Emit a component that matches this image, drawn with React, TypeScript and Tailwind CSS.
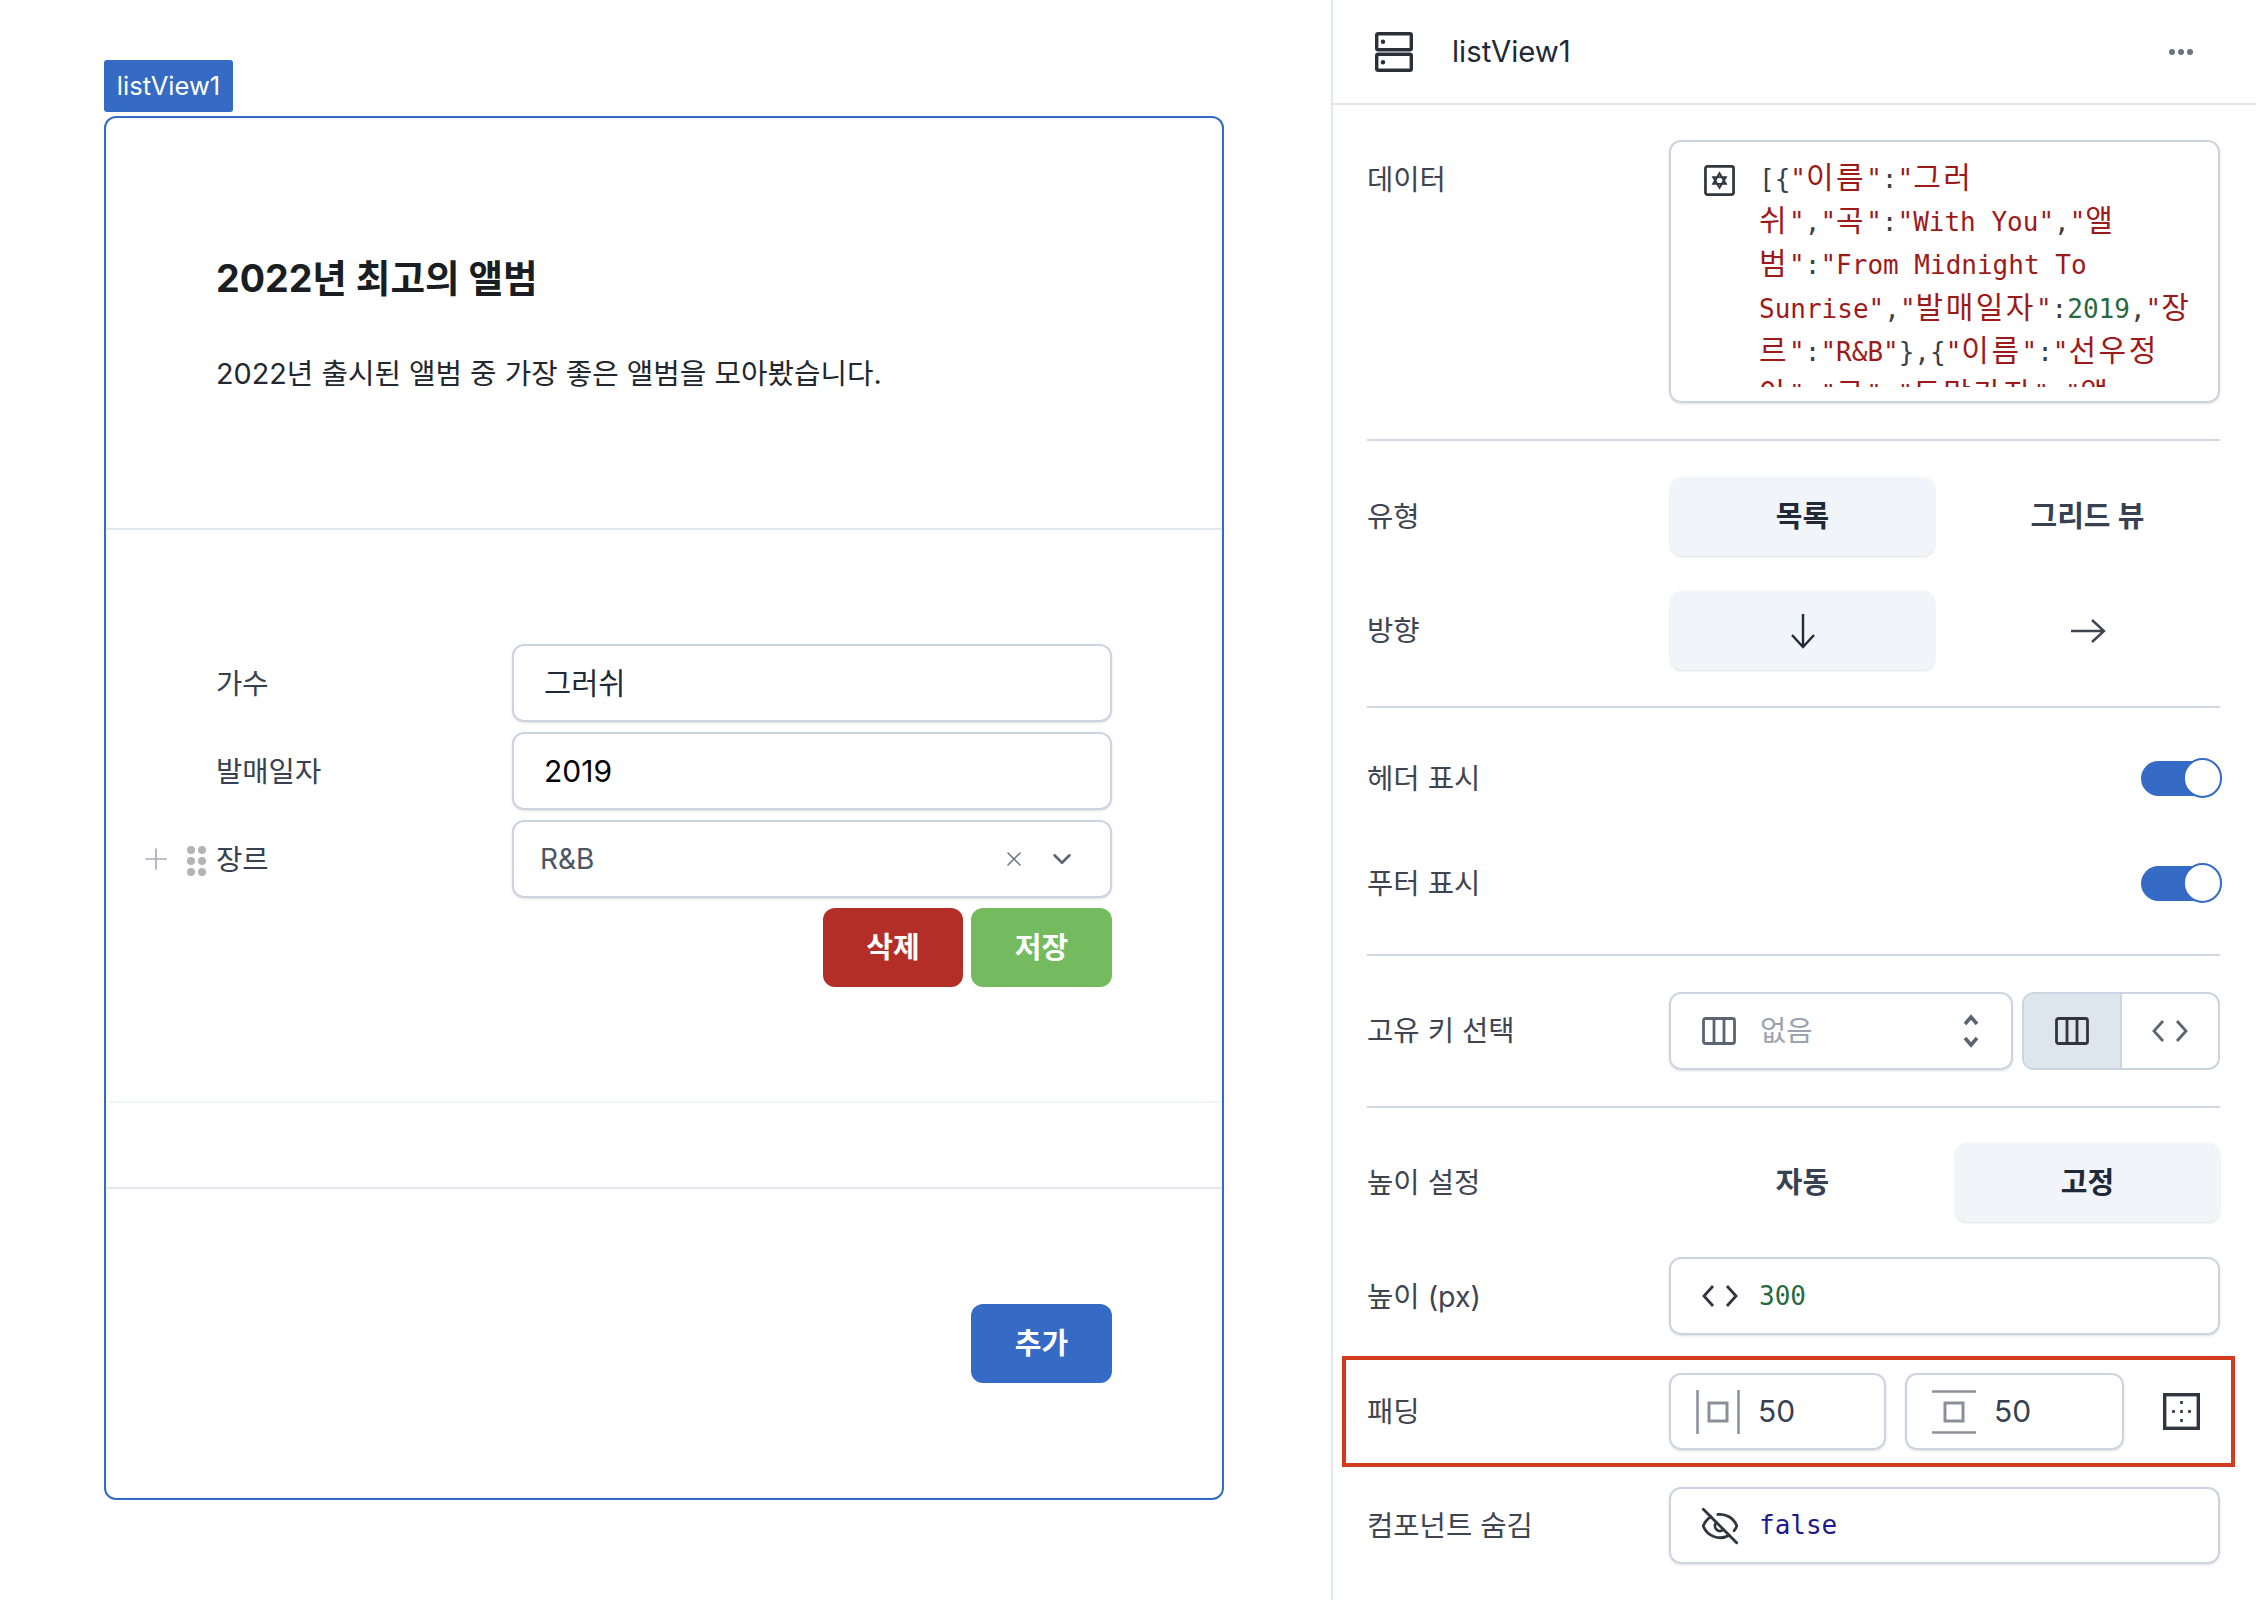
import { EyeOff, X, ChevronDown, Plus } from 'lucide-react';

const mono = "font-['DejaVu_Sans_Mono','Noto_Sans_CJK_KR',monospace]";

function Code({ text, color }: { text: string; color: string }) {
  const parts = text.split(/([가-힣]+)/);
  return (
    <span className={color}>
      {parts.map((p, i) =>
        /[가-힣]/.test(p) ? (
          <span key={i} className="text-[30px] leading-none tracking-[2.5px]">{p}</span>
        ) : (
          <span key={i}>{p}</span>
        )
      )}
    </span>
  );
}

const red = 'text-[#9e1a1a]';
const dark = 'text-[#3b4048]';
const green = 'text-[#27693f]';

const lines: [string, string][][] = [
  [['[{', dark], ['"이름"', red], [':', dark], ['"그러', red]],
  [['쉬"', red], [',', dark], ['"곡"', red], [':', dark], ['"With You"', red], [',', dark], ['"앨', red]],
  [['범"', red], [':', dark], ['"From Midnight To', red]],
  [['Sunrise"', red], [',', dark], ['"발매일자"', red], [':', dark], ['2019', green], [',', dark], ['"장', red]],
  [['르"', red], [':', dark], ['"R&B"', red], ['},{', dark], ['"이름"', red], [':', dark], ['"선우정', red]],
  [['아"', red], [',', dark], ['"곡"', red], [':', dark], ['"도망가자"', red], [',', dark], ['"앨', red]],
];

function TableIcon({ className }: { className: string }) {
  return (
    <svg viewBox="0 0 34 28" fill="none" stroke="currentColor" strokeWidth="2.8" className={className}>
      <rect x="1.5" y="1.5" width="31" height="25" rx="2" />
      <path d="M12 1.5v25M22 1.5v25" />
    </svg>
  );
}

function CodeIcon({ className }: { className: string }) {
  return (
    <svg viewBox="0 0 36 24" fill="none" stroke="currentColor" strokeWidth="2.8" className={className}>
      <path d="M11 2 2 12l9 10M25 2l9 10-9 10" />
    </svg>
  );
}

function Toggle() {
  return (
    <div className="relative w-[81px] h-[40px] flex items-center">
      <div className="w-[62px] h-[35px] rounded-l-full bg-[#356ac5]" />
      <div className="absolute right-0 top-0 w-[39px] h-[40px] rounded-full bg-white border-2 border-[#356ac5]" />
    </div>
  );
}

function Field({ children }: { children: React.ReactNode }) {
  return (
    <div className="h-[78px] border-2 border-[#cbd5e1] rounded-[12px] bg-white shadow-sm flex items-center">
      {children}
    </div>
  );
}

function FormRow({ label, children }: { label: string; children: React.ReactNode }) {
  return (
    <div className="flex items-center relative">
      <div className="w-[296px] pt-[3px] text-[28.6px] text-[#374151]">{label}</div>
      <div className="flex-1">{children}</div>
    </div>
  );
}

function Label({ children }: { children: React.ReactNode }) {
  return <div className="w-[302px] shrink-0 text-[28.6px] leading-[40px] text-[#3f4550]">{children}</div>;
}

function Seg({ active, children }: { active?: boolean; children: React.ReactNode }) {
  return (
    <div
      className={
        active
          ? 'w-[265px] h-[79px] rounded-[12px] bg-[#f1f4f8] shadow-sm flex items-center justify-center text-[29px] font-semibold text-[#1f2937]'
          : 'w-[265px] h-[79px] rounded-[12px] flex items-center justify-center text-[29px] font-semibold text-[#374151]'
      }
    >
      {children}
    </div>
  );
}

function Line({ mt }: { mt: string }) {
  return <div className={`${mt} h-[2px] bg-[#cfd8e3]`} />;
}

export default function App() {
  return (
    <div className="w-[2256px] h-[1600px] overflow-hidden bg-white flex font-['Inter','Noto_Sans_CJK_KR',sans-serif]">
      {/* Canvas */}
      <div className="w-[1331px] shrink-0 pl-[104px] pt-[60px]">
        <div className="w-[129px] h-[52px] mb-[4px] rounded-[3px] bg-[#356ac5] text-white text-[25.5px] flex items-center justify-center">
          listView1
        </div>
        <div className="w-[1120px] h-[1384px] border-2 border-[#356ac5] rounded-[12px] flex flex-col">
          <div className="h-[412px] shrink-0 border-b-2 border-[#e2e8f0] pl-[110px] pt-[133px]">
            <h1 className="text-[37.6px] leading-[56px] font-bold text-[#1a1d21]">2022년 최고의 앨범</h1>
            <p className="mt-[45px] text-[28.8px] leading-[44px] text-[#23272e]">2022년 출시된 앨범 중 가장 좋은 앨범을 모아봤습니다.</p>
          </div>
          <div className="h-[573px] shrink-0 border-b-2 border-[#f1f5f9] px-[110px] pt-[114px] flex flex-col gap-[10px]">
            <FormRow label="가수">
              <Field><span className="pl-[30px] text-[29.5px] text-[#1f2937]">그러쉬</span></Field>
            </FormRow>
            <FormRow label="발매일자">
              <Field><span className="pl-[30px] text-[30px] text-black">2019</span></Field>
            </FormRow>
            <FormRow label="장르">
              <Plus className="absolute -left-[77px] top-[22px] w-[34px] h-[34px] text-[#a8adb5]" strokeWidth={1.2} />
              <div className="absolute -left-[29px] top-[26px] grid grid-cols-2 gap-x-[3px] gap-y-[3px]">
                {[0, 1, 2, 3, 4, 5].map((i) => (
                  <div key={i} className="w-[8px] h-[8px] rounded-full bg-[#b4b4b4]" />
                ))}
              </div>
              <Field>
                <span className="pl-[26px] flex-1 text-[28px] text-[#4b5563]">R&amp;B</span>
                <X className="w-[24px] h-[24px] text-[#6b7280]" strokeWidth={1.5} />
                <ChevronDown className="ml-[21px] mr-[33px] w-[30px] h-[30px] text-[#5b6472]" strokeWidth={2} />
              </Field>
            </FormRow>
            <div className="flex justify-end gap-[8px]">
              <div className="w-[140px] h-[79px] rounded-[12px] bg-[#b32e26] text-white text-[29px] font-semibold flex items-center justify-center">삭제</div>
              <div className="w-[141px] h-[79px] rounded-[12px] bg-[#73bb5e] text-white text-[29px] font-semibold flex items-center justify-center">저장</div>
            </div>
          </div>
          <div className="h-[86px] shrink-0 border-b-2 border-[#e2e8f0]" />
          <div className="flex-1 flex justify-end px-[110px] pt-[115px]">
            <div className="w-[141px] h-[79px] rounded-[12px] bg-[#356ac5] text-white text-[29px] font-semibold flex items-center justify-center">추가</div>
          </div>
        </div>
      </div>

      {/* Inspector */}
      <div className="w-[925px] shrink-0 border-l-2 border-[#e2e8f0]">
        <div className="h-[105px] border-b-2 border-[#e2e8f0] pl-[42px] pr-[63px] flex items-center">
          <svg viewBox="0 0 38 40" fill="none" stroke="#2b3038" strokeWidth="3.4" className="w-[38px] h-[40px]">
            <rect x="1.7" y="1.7" width="34.6" height="16" rx="1.5" />
            <rect x="1.7" y="22.3" width="34.6" height="16" rx="1.5" />
            <circle cx="8" cy="9.7" r="2.2" fill="#2b3038" stroke="none" />
            <circle cx="8" cy="30.3" r="2.2" fill="#2b3038" stroke="none" />
          </svg>
          <div className="ml-[39px] flex-1 text-[29.3px] text-[#1f2937]">listView1</div>
          <div className="flex gap-[3px]">
            <div className="w-[6px] h-[6px] rounded-full bg-[#6b7280]" />
            <div className="w-[6px] h-[6px] rounded-full bg-[#6b7280]" />
            <div className="w-[6px] h-[6px] rounded-full bg-[#6b7280]" />
          </div>
        </div>

        <div className="pl-[34px] pr-[36px] flex flex-col">
          {/* 데이터 */}
          <div className="mt-[35px] flex">
            <Label><div className="pt-[20px]">데이터</div></Label>
            <div className="flex-1 h-[263px] border-2 border-[#cbd5e1] rounded-[12px] shadow-sm pl-[33px] pt-[16px] flex">
              <svg viewBox="0 0 32 32" fill="none" stroke="#2f3640" strokeWidth="2.8" className="mt-[7px] w-[31px] h-[31px] shrink-0">
                <rect x="1.5" y="1.5" width="29" height="29" rx="2" />
                <path d="M16 8.5l6.5 11h-13zM16 23.5l-6.5-11h13z" strokeWidth="2" />
              </svg>
              <div className={`ml-[24px] h-[229px] overflow-hidden text-[26px] leading-[43.2px] whitespace-pre ${mono}`}>
                {lines.map((tokens, i) => (
                  <div key={i}>
                    {tokens.map(([t, c], j) => (
                      <Code key={j} text={t} color={c} />
                    ))}
                  </div>
                ))}
              </div>
            </div>
          </div>

          <Line mt="mt-[36px]" />

          {/* 유형 / 방향 */}
          <div className="mt-[36px] flex items-center">
            <Label>유형</Label>
            <div className="flex-1 pl-[1px] flex justify-between">
              <Seg active>목록</Seg>
              <Seg>그리드 뷰</Seg>
            </div>
          </div>
          <div className="mt-[35px] flex items-center">
            <Label>방향</Label>
            <div className="flex-1 pl-[1px] flex justify-between">
              <Seg active>
                <svg viewBox="0 0 26 36" fill="none" stroke="#1f2937" strokeWidth="2.4" className="w-[26px] h-[36px]">
                  <path d="M13 1v33M2 22l11 12 11-12" />
                </svg>
              </Seg>
              <Seg>
                <svg viewBox="0 0 36 26" fill="none" stroke="#3f4550" strokeWidth="2.4" className="w-[36px] h-[26px]">
                  <path d="M1 13h33M22 2l12 11-12 11" />
                </svg>
              </Seg>
            </div>
          </div>

          <Line mt="mt-[36px]" />

          {/* 헤더 / 푸터 */}
          <div className="mt-[50px] flex items-center justify-between -mr-[2px]">
            <Label><div className="h-[40px] pt-[1px]">헤더 표시</div></Label>
            <Toggle />
          </div>
          <div className="mt-[65px] flex items-center justify-between -mr-[2px]">
            <Label><div className="h-[40px] pt-[1px]">푸터 표시</div></Label>
            <Toggle />
          </div>

          <Line mt="mt-[51px]" />

          {/* 고유 키 선택 */}
          <div className="mt-[36px] flex items-center">
            <Label>고유 키 선택</Label>
            <div className="flex-1 flex justify-between">
              <div className="w-[344px] h-[78px] border-2 border-[#cbd5e1] rounded-[12px] shadow-sm flex items-center pl-[31px] pr-[32px]">
                <TableIcon className="w-[34px] h-[28px] text-[#5b6472]" />
                <span className="ml-[24px] flex-1 text-[28.6px] text-[#9ca3af]">없음</span>
                <svg viewBox="0 0 16 34" fill="none" stroke="#5b6472" strokeWidth="3.6" className="w-[16px] h-[34px]">
                  <path d="M2 10l6-7 6 7M2 24l6 7 6-7" />
                </svg>
              </div>
              <div className="w-[198px] h-[78px] border-2 border-[#cbd5e1] rounded-[12px] overflow-hidden flex">
                <div className="w-[98px] bg-[#dde5ed] border-r-2 border-[#cbd5e1] flex items-center justify-center">
                  <TableIcon className="w-[34px] h-[28px] text-[#2f3640]" />
                </div>
                <div className="flex-1 flex items-center justify-center">
                  <CodeIcon className="w-[36px] h-[24px] text-[#5b6472]" />
                </div>
              </div>
            </div>
          </div>

          <Line mt="mt-[36px]" />

          {/* 높이 */}
          <div className="mt-[35px] flex items-center">
            <Label>높이 설정</Label>
            <div className="flex-1 pl-[1px] flex justify-between">
              <Seg>자동</Seg>
              <Seg active>고정</Seg>
            </div>
          </div>
          <div className="mt-[35px] flex items-center">
            <Label><div className="pt-[2px]">높이 (px)</div></Label>
            <div className="flex-1 h-[78px] border-2 border-[#cbd5e1] rounded-[12px] shadow-sm flex items-center pl-[31px]">
              <CodeIcon className="w-[36px] h-[24px] text-[#2f3640]" />
              <span className={`ml-[21px] text-[26px] text-[#27693f] ${mono}`}>300</span>
            </div>
          </div>

          {/* 패딩 */}
          <div className="mt-[38px] flex items-center relative">
            <div className="absolute -left-[25px] -right-[15px] -top-[17px] -bottom-[17px] border-[4px] border-[#d13c1f]" />
            <Label>패딩</Label>
            <div className="flex-1 flex items-center">
              <div className="w-[217px] h-[77px] border-2 border-[#cbd5e1] rounded-[12px] shadow-sm flex items-center pl-[25px]">
                <svg viewBox="0 0 44 44" fill="none" stroke="#8a8f99" strokeWidth="2.5" className="w-[44px] h-[44px]">
                  <path d="M1.5 0v44M42.5 0v44" />
                  <rect x="13" y="13" width="18" height="18" strokeWidth="3" />
                </svg>
                <span className="ml-[18px] text-[30px] text-[#374151]">50</span>
              </div>
              <div className="ml-[19px] w-[219px] h-[77px] border-2 border-[#cbd5e1] rounded-[12px] shadow-sm flex items-center pl-[25px]">
                <svg viewBox="0 0 44 44" fill="none" stroke="#8a8f99" strokeWidth="2.5" className="w-[44px] h-[44px]">
                  <path d="M0 1.5h44M0 42.5h44" />
                  <rect x="13" y="13" width="18" height="18" strokeWidth="3" />
                </svg>
                <span className="ml-[18px] text-[30px] text-[#374151]">50</span>
              </div>
              <svg viewBox="0 0 37 37" fill="none" stroke="#2f3640" strokeWidth="3.4" className="ml-[39px] w-[37px] h-[37px]">
                <rect x="1.7" y="1.7" width="33.6" height="33.6" />
                <path d="M18.5 8v3M18.5 17v3M18.5 26v3M9 18.5h3M25 18.5h3" strokeWidth="2.6" />
              </svg>
            </div>
          </div>

          {/* 컴포넌트 숨김 */}
          <div className="mt-[37px] flex items-center">
            <Label>컴포넌트 숨김</Label>
            <div className="flex-1 h-[77px] border-2 border-[#cbd5e1] rounded-[12px] shadow-sm flex items-center pl-[29px]">
              <EyeOff className="w-[40px] h-[40px] text-[#2f3640]" strokeWidth={1.7} />
              <span className={`ml-[19px] text-[26px] text-[#1c1a8c] ${mono}`}>false</span>
            </div>
          </div>
        </div>
      </div>
    </div>
  );
}
